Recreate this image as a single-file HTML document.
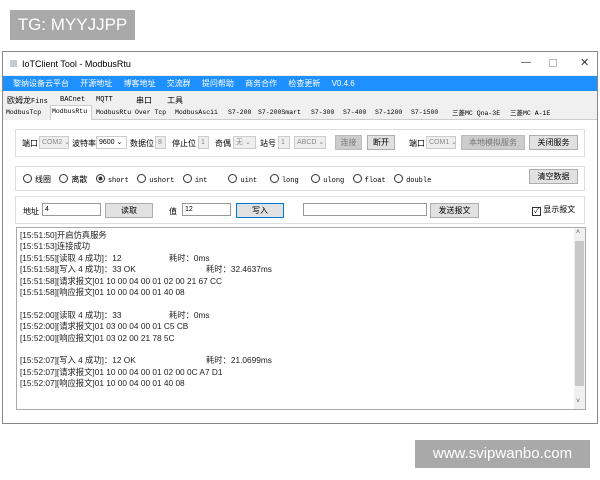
<!DOCTYPE html>
<html><head><meta charset="utf-8"><style>
*{box-sizing:border-box;margin:0;padding:0}
body{width:600px;height:480px;background:#fff;position:relative;overflow:hidden;font-family:"Liberation Sans","Noto Sans CJK SC",sans-serif;font-size:8px;color:#000}
.a{position:absolute;white-space:nowrap}
.tag{background:#a9a9a9;color:#fff;font-size:17px;line-height:30px;text-align:center}
.win{left:2px;top:51px;width:596px;height:373px;border:1px solid #888;background:#f0f0f0}
.menu{background:#1e90ff;color:#fff}
.mono{font-family:"Liberation Mono","Noto Sans CJK SC",monospace;font-size:7px}
.box{border:1px solid #ddd;background:#f0f0f0}
.in{background:#fff;border:1px solid #999;height:13px;line-height:11px;padding-left:2px;font-size:7px}
.dis{background:#eee;border:1px solid #ccc;color:#888;height:13px;line-height:11px;padding-left:2px;font-size:7px}
.btn{background:#e1e1e1;border:1px solid #adadad;height:15px;line-height:13px;text-align:center;font-size:8px}
.btnd{background:#ccc;border:1px solid #bbb;color:#777;height:15px;line-height:13px;text-align:center}
.r{display:inline-block;width:9px;height:9px;border:1px solid #333;border-radius:50%;vertical-align:-1px;margin-right:3px;background:#fff}
.log div{height:11.4px;line-height:11.4px;font-size:8.3px;color:#222}
.cn{font-family:"Noto Sans CJK SC",sans-serif;font-size:8px}
</style></head><body>
<div class="a tag" style="left:10px;top:10px;width:125px;height:30px">TG: MYYJJPP</div>
<div class="a tag" style="left:415px;top:440px;width:175px;height:28px;line-height:28px;font-size:15px">www.svipwanbo.com</div>

<div class="a win"></div>
<div class="a" style="left:3px;top:52px;width:594px;height:23px;background:#fff"></div>
<div class="a" style="left:10px;top:60px;width:7px;height:7px;background:#9ab;opacity:.6"></div>
<div class="a" style="left:22px;top:59px;font-size:9px">IoTClient Tool - ModbusRtu</div>
<div class="a" style="left:521px;top:57px;font-size:10px;color:#333">—</div>
<div class="a" style="left:549px;top:59px;width:8px;height:8px;border:1px solid #bbb"></div>
<div class="a" style="left:580px;top:56px;font-size:11px;color:#333">✕</div>
<div class="a menu" style="left:3px;top:76px;width:594px;height:15px"></div>
<div class="a" style="left:13px;top:78px;color:#fff;font-size:8px;word-spacing:9px">黎纳设备云平台 开源地址 博客地址 交流群 提问帮助 商务合作 检查更新 <span style="word-spacing:0">V0.4.6</span></div>

<div class="a" style="left:3px;top:106px;width:594px;height:14px;border-bottom:1px solid #ccc"></div>
<div class="a" style="left:7px;top:95px;font-size:8px">欧姆龙<span class="mono">Fins</span></div>
<div class="a mono" style="left:60px;top:96px">BACnet</div>
<div class="a mono" style="left:96px;top:96px">MQTT</div>
<div class="a" style="left:136px;top:95px">串口</div>
<div class="a" style="left:167px;top:95px">工具</div>
<div class="a" style="left:3px;top:107px;width:48px;height:13px;background:#f0f0f0"></div>
<div class="a" style="left:50px;top:105px;width:42px;height:15px;background:#fff;border:1px solid #ccc;border-bottom:none"></div>
<div class="a mono" style="left:6px;top:109px;font-size:6.5px;word-spacing:0">ModbusTcp</div>
<div class="a mono" style="left:52px;top:108px;font-size:6.5px">ModbusRtu</div>
<div class="a mono" style="left:96px;top:109px;font-size:6.5px">ModbusRtu Over Tcp</div>
<div class="a mono" style="left:175px;top:109px;font-size:6.5px">ModbusAscii</div>
<div class="a mono" style="left:228px;top:109px;font-size:6.5px">S7-200</div>
<div class="a mono" style="left:258px;top:109px;font-size:6.5px">S7-200Smart</div>
<div class="a mono" style="left:311px;top:109px;font-size:6.5px">S7-300</div>
<div class="a mono" style="left:343px;top:109px;font-size:6.5px">S7-400</div>
<div class="a mono" style="left:375px;top:109px;font-size:6.5px">S7-1200</div>
<div class="a mono" style="left:411px;top:109px;font-size:6.5px">S7-1500</div>
<div class="a mono" style="left:452px;top:107px;font-size:6.5px">三菱MC Qna-3E</div>
<div class="a mono" style="left:510px;top:107px;font-size:6.5px">三菱MC A-1E</div>

<div class="a" style="left:3px;top:120px;width:594px;height:303px;background:#fff"></div>
<div class="a box" style="left:15px;top:129px;width:570px;height:28px;background:#fff"></div>
<div class="a" style="left:22px;top:138px">端口</div>
<div class="a dis" style="left:39px;top:136px;width:30px">COM2 ⌄</div>
<div class="a" style="left:72px;top:138px">波特率</div>
<div class="a in" style="left:96px;top:136px;width:31px;border-color:#ccc">9600 ⌄</div>
<div class="a" style="left:130px;top:138px">数据位</div>
<div class="a dis" style="left:155px;top:136px;width:11px">8</div>
<div class="a" style="left:172px;top:138px">停止位</div>
<div class="a dis" style="left:198px;top:136px;width:11px">1</div>
<div class="a" style="left:215px;top:138px">奇偶</div>
<div class="a dis" style="left:233px;top:136px;width:23px">无 ⌄</div>
<div class="a" style="left:260px;top:138px">站号</div>
<div class="a dis" style="left:278px;top:136px;width:12px">1</div>
<div class="a dis" style="left:294px;top:136px;width:32px">ABCD ⌄</div>
<div class="a btnd" style="left:335px;top:135px;width:27px">连接</div>
<div class="a btn" style="left:367px;top:135px;width:28px">断开</div>
<div class="a" style="left:409px;top:138px">端口</div>
<div class="a dis" style="left:426px;top:136px;width:30px">COM1 ⌄</div>
<div class="a btnd" style="left:461px;top:135px;width:64px">本地模拟服务</div>
<div class="a btn" style="left:529px;top:135px;width:49px">关闭服务</div>

<div class="a box" style="left:15px;top:166px;width:570px;height:25px;background:#fff"></div>
<div class="a mono" style="left:23px;top:174px;font-size:7px;word-spacing:0">
<span class="r"></span><span class="cn">线圈</span>&nbsp;&nbsp;<span class="r"></span><span class="cn">离散</span>&nbsp;&nbsp;<span class="r" style="background:radial-gradient(#333 35%,#fff 45%)"></span>short&nbsp;&nbsp;<span class="r"></span>ushort&nbsp;&nbsp;<span class="r"></span>int&nbsp;&nbsp;&nbsp;&nbsp;&nbsp;<span class="r"></span>uint&nbsp;&nbsp;&nbsp;<span class="r"></span>long&nbsp;&nbsp;&nbsp;<span class="r"></span>ulong&nbsp;&nbsp;<span class="r"></span>float&nbsp;&nbsp;<span class="r"></span>double</div>
<div class="a btn" style="left:529px;top:169px;width:49px">清空数据</div>

<div class="a box" style="left:15px;top:196px;width:570px;height:28px;background:#fff"></div>
<div class="a" style="left:23px;top:206px">地址</div>
<div class="a in" style="left:42px;top:203px;width:59px">4</div>
<div class="a btn" style="left:105px;top:203px;width:48px">读取</div>
<div class="a" style="left:169px;top:206px">值</div>
<div class="a in" style="left:182px;top:203px;width:49px">12</div>
<div class="a btn" style="left:236px;top:203px;width:48px;border-color:#0078d7">写入</div>
<div class="a in" style="left:303px;top:203px;width:124px"></div>
<div class="a btn" style="left:430px;top:203px;width:49px">发送报文</div>
<div class="a" style="left:532px;top:204px;font-size:8px"><span style="display:inline-block;width:9px;height:9px;border:1px solid #333;font-size:7px;line-height:7px;text-align:center;vertical-align:-1px">✓</span> 显示报文</div>

<div class="a" style="left:16px;top:227px;width:570px;height:183px;border:1px solid #aaa;background:#fff"></div>
<div class="a" style="left:574px;top:228px;width:11px;height:181px;background:#f0f0f0"></div>
<div class="a" style="left:575px;top:241px;width:9px;height:145px;background:#c8c8c8"></div>
<div class="a" style="left:576px;top:229px;font-size:7px;color:#555">˄</div>
<div class="a" style="left:576px;top:398px;font-size:7px;color:#555">˅</div>
<div class="a log" style="left:20px;top:230px">
<div>[15:51:50]开启仿真服务</div>
<div>[15:51:53]连接成功</div>
<div>[15:51:55][读取 4 成功]：12<span style="position:absolute;left:149px">耗时：0ms</span></div>
<div>[15:51:58][写入 4 成功]：33 OK<span style="position:absolute;left:186px">耗时：32.4637ms</span></div>
<div>[15:51:58][请求报文]01 10 00 04 00 01 02 00 21 67 CC</div>
<div>[15:51:58][响应报文]01 10 00 04 00 01 40 08</div>
<div></div>
<div>[15:52:00][读取 4 成功]：33<span style="position:absolute;left:149px">耗时：0ms</span></div>
<div>[15:52:00][请求报文]01 03 00 04 00 01 C5 CB</div>
<div>[15:52:00][响应报文]01 03 02 00 21 78 5C</div>
<div></div>
<div>[15:52:07][写入 4 成功]：12 OK<span style="position:absolute;left:186px">耗时：21.0699ms</span></div>
<div>[15:52:07][请求报文]01 10 00 04 00 01 02 00 0C A7 D1</div>
<div>[15:52:07][响应报文]01 10 00 04 00 01 40 08</div>
</div>
</body></html>
